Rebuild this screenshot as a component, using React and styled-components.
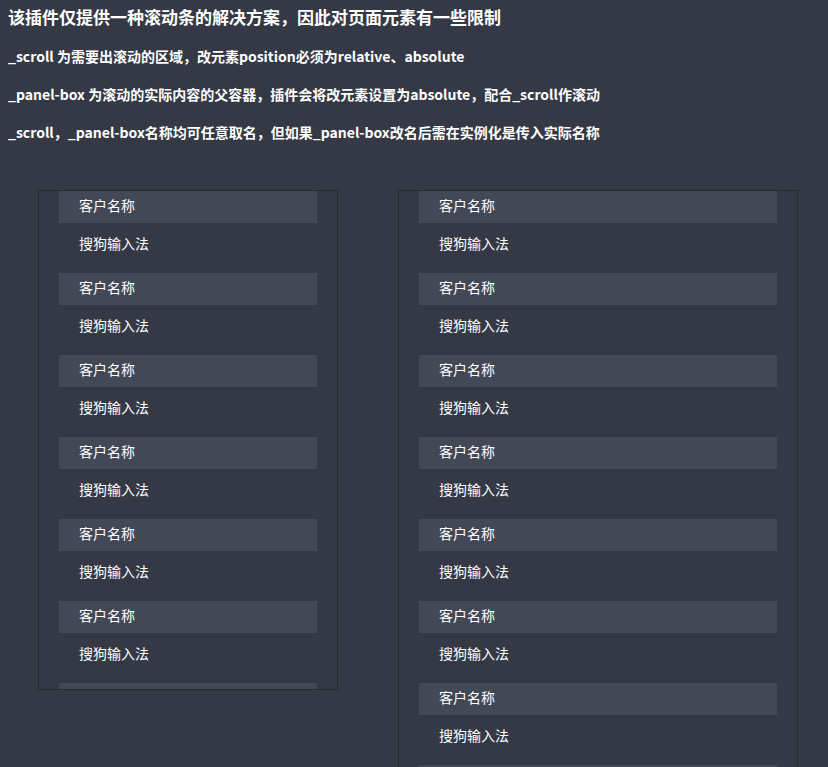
import React from "react";
import styled, { createGlobalStyle } from "styled-components";

const Global = createGlobalStyle`
  html, body {
    margin: 0;
    padding: 0;
    overflow: hidden;
    background: #343945;
  }
  body {
    padding: 0 8px;
    font-family: "Noto Sans CJK SC", "Noto Sans", sans-serif;
    color: #ffffff;
  }
`;

const Page = styled.div`
  display: flex;
  flex-direction: column;
  height: 767px;
`;

const Title = styled.h3`
  margin: 7px 0 0;
  font-size: 17px;
  line-height: 20px;
  font-weight: 700;
`;

const Note = styled.p`
  margin: ${(p) => (p.$first ? "17px" : "14px")} 0 0;
  font-size: 14px;
  line-height: 24px;
  font-weight: 700;
`;

const Panels = styled.div`
  display: flex;
  align-items: flex-start;
  gap: 60px;
  padding-left: 30px;
  margin-top: 46px;
`;

const Scroll = styled.div`
  position: relative;
  box-sizing: border-box;
  width: ${(p) => p.$w}px;
  height: ${(p) => p.$h}px;
  border: 1px solid #272b34;
  overflow: hidden;
  flex-shrink: 0;
`;

const PanelBox = styled.ul`
  list-style: none;
  margin: 0;
  padding: 0 20px;
`;

const Item = styled.li`
  display: flex;
  flex-direction: column;
`;

const Head = styled.div`
  height: 32px;
  line-height: 29px;
  padding-left: 20px;
  background: #434857;
  font-size: 14px;
`;

const Body = styled.div`
  height: 40px;
  line-height: 41px;
  margin-bottom: 10px;
  padding-left: 20px;
  font-size: 14px;
`;

const List = ({ count }) => (
  <PanelBox>
    {Array.from({ length: count }).map((_, i) => (
      <Item key={i}>
        <Head>客户名称</Head>
        <Body>搜狗输入法</Body>
      </Item>
    ))}
  </PanelBox>
);

export default function App() {
  return (
    <Page>
      <Global />
      <Title>该插件仅提供一种滚动条的解决方案，因此对页面元素有一些限制</Title>
      <Note $first>_scroll 为需要出滚动的区域，改元素position必须为relative、absolute</Note>
      <Note>_panel-box 为滚动的实际内容的父容器，插件会将改元素设置为absolute，配合_scroll作滚动</Note>
      <Note>_scroll，_panel-box名称均可任意取名，但如果_panel-box改名后需在实例化是传入实际名称</Note>
      <Panels>
        <Scroll $w={300} $h={500}>
          <List count={7} />
        </Scroll>
        <Scroll $w={400} $h={720}>
          <List count={9} />
        </Scroll>
      </Panels>
    </Page>
  );
}
